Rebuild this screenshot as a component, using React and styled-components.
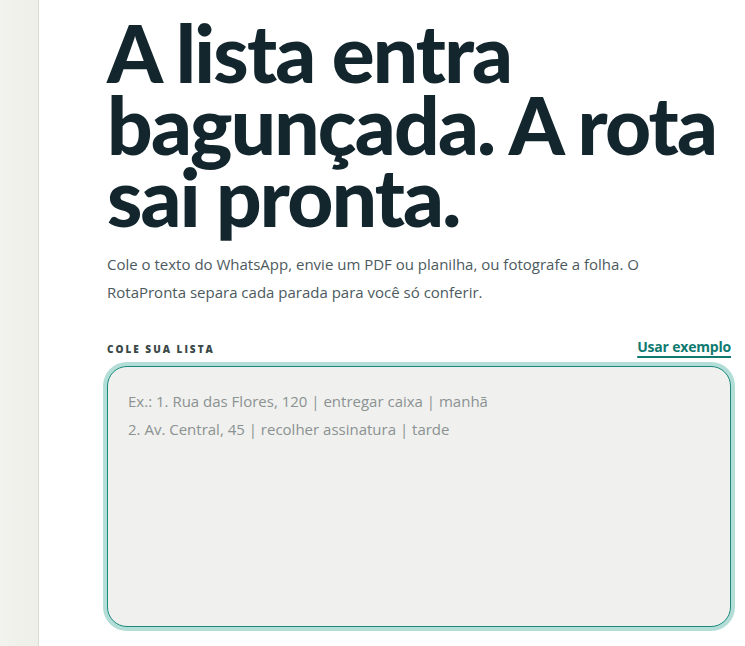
import React from "react";
import styled, { createGlobalStyle } from "styled-components";

const GlobalStyle = createGlobalStyle`
  html, body {
    margin: 0;
    padding: 0;
    background: #ffffff;
  }
  * {
    box-sizing: border-box;
  }
`;

export default function App() {
  return (
    <>
      <GlobalStyle />
      <Page>
        <Sidebar />
        <Main>
          <Headline>
            A lista entra bagunçada. A rota sai pronta.
          </Headline>
          <Lead>
            Cole o texto do WhatsApp, envie um PDF ou planilha, ou fotografe a
            folha. O RotaPronta separa cada parada para você só conferir.
          </Lead>
          <FieldHeader>
            <FieldLabel htmlFor="lista">Cole sua lista</FieldLabel>
            <ExampleLink href="#">Usar exemplo</ExampleLink>
          </FieldHeader>
          <ListInput
            id="lista"
            placeholder={
              "Ex.: 1. Rua das Flores, 120 | entregar caixa | manhã\n2. Av. Central, 45 | recolher assinatura | tarde"
            }
          />
        </Main>
      </Page>
    </>
  );
}

const Page = styled.div`
  display: flex;
  min-height: 100vh;
  font-family: "Open Sans", "Noto Sans", sans-serif;
`;

const Sidebar = styled.aside`
  flex: 0 0 39px;
  background: linear-gradient(90deg, #f2f2ee 0%, #efefe9 100%);
  border-right: 1px solid #dcdcd2;
`;

const Main = styled.main`
  flex: 1;
  padding: 16px 14px 0 68px;
`;

const Headline = styled.h1`
  margin: 0;
  font-family: "Lato", "Open Sans", sans-serif;
  font-weight: 900;
  font-size: 80px;
  line-height: 72px;
  letter-spacing: -1.8px;
  color: #13262d;
  max-width: 630px;
`;

const Lead = styled.p`
  margin: 18px 0 0;
  font-size: 15px;
  line-height: 28px;
  color: #4c5a5e;
  max-width: 560px;
`;

const FieldHeader = styled.div`
  display: flex;
  justify-content: space-between;
  align-items: flex-end;
  margin-top: 31px;
`;

const FieldLabel = styled.label`
  font-size: 10px;
  font-weight: 800;
  letter-spacing: 2px;
  text-transform: uppercase;
  color: #3a4848;
`;

const ExampleLink = styled.a`
  font-size: 14px;
  font-weight: 700;
  color: #0f7a70;
  text-decoration: underline;
  text-decoration-thickness: 2px;
  text-underline-offset: 4px;
  letter-spacing: -0.2px;
`;

const ListInput = styled.textarea`
  display: block;
  width: 100%;
  margin: 10px 0 0;
  height: 261px;
  resize: none;
  padding: 20px 20px;
  border: 1.5px solid #1a8a7c;
  border-radius: 20px;
  box-shadow: 0 0 0 4px #b3ddd7;
  background: #f0f0ee;
  font-family: "Open Sans", "Noto Sans", sans-serif;
  font-size: 15px;
  line-height: 28px;
  color: #24363a;
  outline: none;

  &::placeholder {
    color: #8b9292;
  }
`;
